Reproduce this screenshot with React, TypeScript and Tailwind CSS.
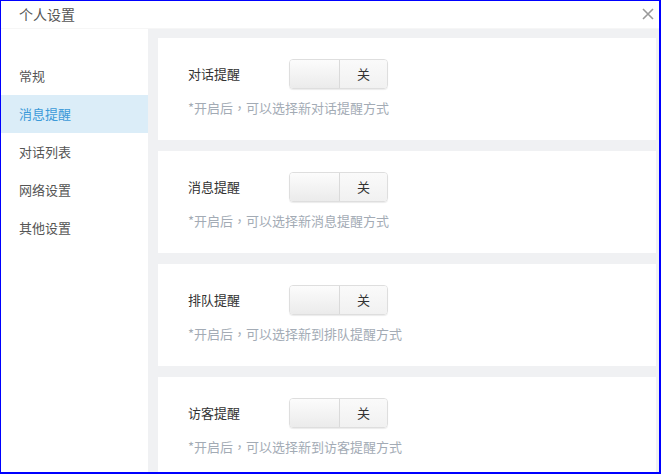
import React, { useState } from 'react'

const menus = ['常规', '消息提醒', '对话列表', '网络设置', '其他设置']

const items = [
    { label: '对话提醒', hint: '*开启后，可以选择新对话提醒方式' },
    { label: '消息提醒', hint: '*开启后，可以选择新消息提醒方式' },
    { label: '排队提醒', hint: '*开启后，可以选择新到排队提醒方式' },
    { label: '访客提醒', hint: '*开启后，可以选择新到访客提醒方式' },
]

function Toggle() {
    return (
        <div className="flex h-[30px] w-[99px] overflow-hidden rounded-[4px] border border-[#dedede] shadow-[0_1px_1px_rgba(0,0,0,0.08)]">
            <div className="w-[49px] bg-gradient-to-b from-[#fcfcfc] to-[#ebebeb]" />
            <div className="flex flex-1 items-center justify-center border-l border-[#dadada] bg-gradient-to-b from-[#fafafa] to-[#f1f1f1] text-[13px] text-[#333]">
                关
            </div>
        </div>
    )
}

export default function App() {
    const [active, setActive] = useState(1)

    return (
        <div
            className="flex h-[474px] w-[661px] flex-col overflow-hidden border-t border-l border-r-2 border-b-2 border-[#0000ff] bg-white"
            style={{ fontFamily: '"Noto Sans CJK SC", "Noto Sans", sans-serif' }}
        >
            {/* header */}
            <div className="flex h-[28px] shrink-0 items-center justify-between border-b border-[#f6f6f6] pl-[18px] pr-[5px]">
                <span className="text-[14px] text-[#555]">个人设置</span>
                <svg width="12" height="12" viewBox="0 0 12 12" className="mb-[2px]">
                    <path d="M1 1L11 11M11 1L1 11" stroke="#9a9a9a" strokeWidth="1.6" />
                </svg>
            </div>

            <div className="flex min-h-0 flex-1">
                {/* sidebar */}
                <div className="w-[147px] shrink-0 bg-white pt-[28px]">
                    {menus.map((m, i) => (
                        <div
                            key={m}
                            onClick={() => setActive(i)}
                            className={
                                i === active
                                    ? 'flex h-[38px] cursor-pointer items-center bg-[#dbedf8] pl-[18px] text-[13px] text-[#3b9ad9]'
                                    : 'flex h-[38px] cursor-pointer items-center pl-[18px] text-[13px] text-[#555]'
                            }
                        >
                            {m}
                        </div>
                    ))}
                </div>

                {/* content */}
                <div className="flex flex-1 flex-col gap-[11px] overflow-hidden bg-[#f0f1f3] pt-[9px] pl-[10px] pr-[3px]">
                    {items.map((it) => (
                        <div key={it.label} className="h-[102px] shrink-0 bg-white pt-[21px] pl-[30px]">
                            <div className="flex h-[30px] items-center">
                                <span className="w-[101px] text-[13px] text-[#333]">{it.label}</span>
                                <Toggle />
                            </div>
                            <div
                                className="mt-[10px] text-[13px] leading-[18px] text-[#a3abb5]"
                                style={{ fontFamily: '"Noto Sans CJK TC", "Noto Sans CJK SC", sans-serif' }}
                            >
                                {it.hint}
                            </div>
                        </div>
                    ))}
                </div>
            </div>
        </div>
    )
}
